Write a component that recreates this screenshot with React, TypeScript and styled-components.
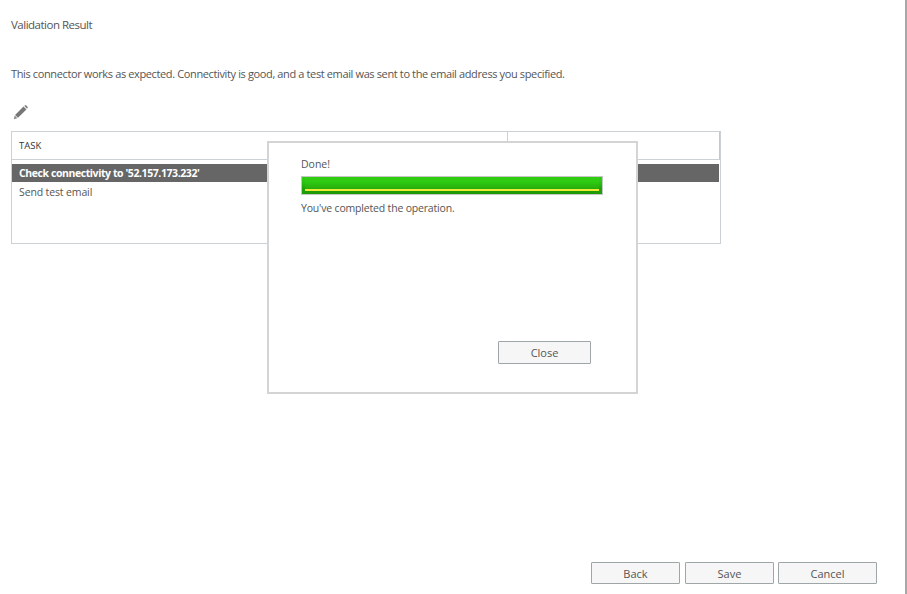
import React from "react";
import styled, { createGlobalStyle } from "styled-components";

const Global = createGlobalStyle`
  html, body { margin: 0; padding: 0; background: #fff; overflow: hidden; }
  * { box-sizing: border-box; }
`;

const Page = styled.div`
  position: relative;
  width: 907px;
  height: 594px;
  border-right: 2px solid #a8a8a8;
  padding: 0 0 10px 11px;
  display: flex;
  flex-direction: column;
  font-family: "Open Sans", "Noto Sans", sans-serif;
  font-size: 11px;
  color: #444;
  background: #fff;
`;

const Title = styled.h1`
  margin: 17px 0 0;
  font-size: 11.5px;
  line-height: 15px;
  font-weight: 400;
  letter-spacing: -0.5px;
  color: #555;
`;

const Message = styled.p`
  margin: 34px 0 0;
  font-size: 11px;
  line-height: 15px;
  letter-spacing: -0.37px;
  color: #555;
`;

const EditButton = styled.div`
  margin: 24px 0 0 2px;
  width: 15px;
  height: 15px;
  display: flex;
`;

const Table = styled.div`
  margin-top: 11px;
  width: 710px;
  height: 113px;
  border: 1px solid #ccd1d6;
  display: flex;
  flex-direction: column;
`;

const HeaderRow = styled.div`
  height: 28px;
  flex: none;
  display: grid;
  grid-template-columns: 495px 1fr;
  border-bottom: 1px solid #ccd1d6;
  border-right: 1px solid #c4c8cc;
`;

const HeaderCell = styled.div`
  padding-left: 7px;
  font-size: 9.5px;
  line-height: 27px;
  color: #333;
  & + & { border-left: 1px solid #ccd1d6; }
`;

const Rows = styled.div`
  padding: 4px 1px 0 0;
  display: flex;
  flex-direction: column;
  gap: 1px;
`;

const Row = styled.div<{ $selected?: boolean }>`
  height: 18px;
  padding-left: 7px;
  font-size: 10.5px;
  line-height: 18px;
  letter-spacing: -0.13px;
  font-weight: ${(p) => (p.$selected ? 700 : 400)};
  color: ${(p) => (p.$selected ? "#fff" : "#555")};
  background: ${(p) => (p.$selected ? "#666666" : "transparent")};
  ${(p) => (p.$selected ? "letter-spacing: -0.42px;" : "")}
`;

const Footer = styled.div`
  margin-top: auto;
  display: flex;
  padding-left: 580px;
`;

const Button = styled.button<{ $w: number; $gap?: number }>`
  width: ${(p) => p.$w}px;
  height: 22px;
  margin-right: ${(p) => p.$gap ?? 0}px;
  padding: 1px 0 0;
  border: 1px solid #9ea6a8;
  border-radius: 1px;
  background: #f6f6f6;
  font-family: inherit;
  font-size: 11px;
  line-height: 20px;
  color: #555;
`;

const Dialog = styled.div`
  position: absolute;
  left: 267px;
  top: 141px;
  width: 371px;
  height: 253px;
  border: 2px solid #d4d4d4;
  background: #fff;
  padding: 14px 33px 28px 32px;
  display: flex;
  flex-direction: column;
`;

const Status = styled.div`
  font-size: 10.5px;
  line-height: 14px;
  color: #555;
`;

const Progress = styled.div`
  margin-top: 5px;
  width: 302px;
  height: 19px;
  border: 1px solid #c6c6c6;
  background: linear-gradient(to bottom, #31cb13 0, #2ac210 6px, #1f9f08 12px, #1f9f08 100%);
  padding: 0 3px;
  flex: none;
`;

const ProgressFill = styled.div`
  height: 100%;
  background: linear-gradient(to bottom, #31cd12 0, #2fca12 5px, #26ab0c 12px, #eeea38 12px, #eeea38 14px, #209a06 14px, #209a06 100%);
`;

const Note = styled.div`
  margin-top: 6px;
  font-size: 10.5px;
  line-height: 14px;
  letter-spacing: -0.18px;
  color: #555;
`;

const DialogActions = styled.div`
  margin-top: auto;
  padding-right: 12px;
  display: flex;
  justify-content: flex-end;
`;

const CloseButton = styled(Button)`
  height: 23px;
`;

export default function App() {
  return (
    <Page>
      <Global />
      <Title>Validation Result</Title>
      <Message>
        This connector works as expected. Connectivity is good, and a test email was sent to the email address you specified.
      </Message>
      <EditButton>
        <svg width="15" height="15" viewBox="0 0 16 16">
          <path d="M11.2 1.6 14.3 4.7 5.3 13.6 2.2 10.6Z" fill="#777" />
          <path d="M1.8 11.3 4.6 14.1 0.9 15.1Z" fill="#888" />
          <path d="M12 .9 13 .3Q13.6 0 14.2.5L15.4 1.8Q15.9 2.4 15.6 3L15 3.9Z" fill="#777" />
        </svg>
      </EditButton>
      <Table>
        <HeaderRow>
          <HeaderCell>TASK</HeaderCell>
          <HeaderCell />
        </HeaderRow>
        <Rows>
          <Row $selected>Check connectivity to '52.157.173.232'</Row>
          <Row>Send test email</Row>
        </Rows>
      </Table>
      <Footer>
        <Button $w={89} $gap={5}>Back</Button>
        <Button $w={89} $gap={4}>Save</Button>
        <Button $w={99}>Cancel</Button>
      </Footer>
      <Dialog>
        <Status>Done!</Status>
        <Progress>
          <ProgressFill />
        </Progress>
        <Note>You've completed the operation.</Note>
        <DialogActions>
          <CloseButton $w={93}>Close</CloseButton>
        </DialogActions>
      </Dialog>
    </Page>
  );
}
